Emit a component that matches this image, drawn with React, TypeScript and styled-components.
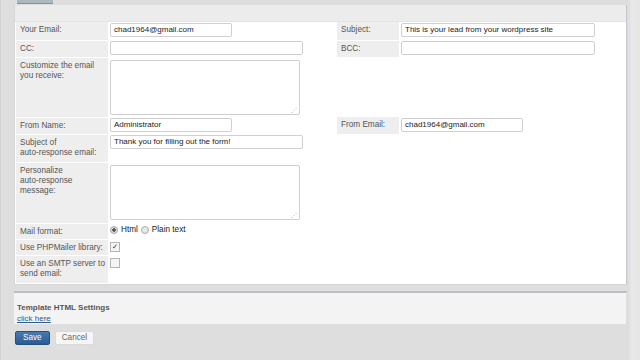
import styled, { createGlobalStyle } from "styled-components";

const GlobalStyle = createGlobalStyle`
  html, body {
    margin: 0;
    padding: 0;
    background: #dedede;
    font-family: "Liberation Sans", Arial, sans-serif;
    font-size: 8px;
    color: #333;
  }
  #root {
    width: 640px;
    height: 360px;
    overflow: hidden;
  }
`;

const Page = styled.div`
  display: flex;
  height: 360px;
`;

const Main = styled.div`
  flex: 1;
  display: flex;
  flex-direction: column;
  padding-left: 13px;
  border-left: 1px solid #d2d2d2;
`;

const Side = styled.div`
  width: 13px;
  background: linear-gradient(to right, #dadada 0, #e9e9e9 5px, #e4e4e4 100%);
`;

const TabStrip = styled.div`
  height: 5px;
  display: flex;
  padding-left: 3px;
`;

const Tab = styled.div`
  width: 36px;
  height: 3px;
  background: #a9b9bd;
  border-bottom: 1px solid #7f979c;
`;

const Panel = styled.div`
  background: #fff;
  border: 1px solid #d6d6d6;
  border-right: 1px solid #c2c8ce;
  border-top: none;
`;

const PanelHead = styled.div`
  height: 16px;
  background: #ececec;
  border-bottom: 1px solid #e4e4e4;
`;

const FormTable = styled.table`
  border-collapse: collapse;
  margin-left: 1px;
  table-layout: fixed;
  width: 610px;
`;

const Label = styled.td<{ $h: number }>`
  background: #eeeeee;
  color: #555;
  height: ${(p) => p.$h}px;
  padding: 3px 3px 0 4px;
  vertical-align: top;
  line-height: 10px;
  font-size: 8.2px;
  border-bottom: 1px solid #fff;
  box-sizing: border-box;
`;

const Field = styled.td`
  vertical-align: top;
  padding: 1px 0 0 2px;
`;

const Blank = styled.td``;

const TextInput = styled.div<{ $w: number }>`
  width: ${(p) => p.$w}px;
  height: 14px;
  box-sizing: border-box;
  border: 1px solid #cfcfcf;
  border-radius: 2px;
  padding: 0 3px;
  line-height: 12px;
  color: #222;
  font-size: 8px;
  white-space: nowrap;
  overflow: hidden;
`;

const TextArea = styled.div`
  width: 190px;
  height: 55px;
  box-sizing: border-box;
  border: 1px solid #cfcfcf;
  border-radius: 2px;
  margin-top: 2px;
  position: relative;
`;

const Grip = styled.span`
  position: absolute;
  right: 2px;
  bottom: 1px;
  font-size: 6px;
  color: #aaa;
  line-height: 6px;
`;

const Choices = styled.div`
  display: flex;
  align-items: center;
  gap: 3px;
  color: #222;
  font-size: 8.2px;
`;

const Radio = styled.span<{ $on?: boolean }>`
  width: 6px;
  height: 6px;
  border-radius: 50%;
  border: 1px solid #a9a9a9;
  background: ${(p) => (p.$on ? "radial-gradient(circle, #555 0 1.5px, #ddd 2px)" : "#e8e8e8")};
  margin-top: 2px;
`;

const Check = styled.span`
  display: inline-flex;
  align-items: center;
  justify-content: center;
  width: 8px;
  height: 8px;
  border: 1px solid #b5b5b5;
  background: #f4f4f4;
  font-size: 7px;
  color: #333;
  margin-top: 2px;
`;

const Gap = styled.div`
  height: 6px;
`;

const Settings = styled.div`
  border-top: 2px solid #b9bec4;
  background: #f3f3f3;
  height: 33px;
  padding: 9px 0 0 3px;
  box-sizing: border-box;
  border-right: 1px solid #e0e0e0;
`;

const SettingsTitle = styled.div`
  font-weight: bold;
  color: #555;
  line-height: 11px;
`;

const Link = styled.a`
  color: #2c5a8c;
  text-decoration: underline;
  line-height: 11px;
`;

const Actions = styled.div`
  display: flex;
  gap: 5px;
  padding: 7px 0 0 1px;
`;

const Button = styled.button<{ $primary?: boolean }>`
  font-family: "Liberation Sans", Arial, sans-serif;
  font-size: 8.2px;
  height: 14px;
  padding: 0 ${(p) => (p.$primary ? 7 : 6)}px;
  border-radius: 2px;
  border: 1px solid ${(p) => (p.$primary ? "#23507f" : "#dadada")};
  background: ${(p) => (p.$primary ? "linear-gradient(#4a7bb0, #2a5b90)" : "#f6f6f6")};
  color: ${(p) => (p.$primary ? "#fff" : "#666")};
  line-height: 12px;
`;

export default function App() {
  return (
    <>
      <GlobalStyle />
      <Page>
        <Main>
          <TabStrip>
            <Tab />
          </TabStrip>
          <Panel>
            <PanelHead />
            <FormTable>
              <colgroup>
                <col style={{ width: 92 }} />
                <col style={{ width: 229 }} />
                <col style={{ width: 62 }} />
                <col />
              </colgroup>
              <tbody>
                <tr>
                  <Label $h={18}>Your Email:</Label>
                  <Field><TextInput $w={122}>chad1964@gmail.com</TextInput></Field>
                  <Label $h={18}>Subject:</Label>
                  <Field><TextInput $w={194}>This is your lead from your wordpress site</TextInput></Field>
                </tr>
                <tr>
                  <Label $h={17}>CC:</Label>
                  <Field><TextInput $w={193} /></Field>
                  <Label $h={17}>BCC:</Label>
                  <Field><TextInput $w={194} /></Field>
                </tr>
                <tr>
                  <Label $h={60}>Customize the email<br />you receive:</Label>
                  <Field><TextArea><Grip>⋰</Grip></TextArea></Field>
                  <Blank />
                  <Blank />
                </tr>
                <tr>
                  <Label $h={17}>From Name:</Label>
                  <Field><TextInput $w={122}>Administrator</TextInput></Field>
                  <Label $h={17}>From Email:</Label>
                  <Field><TextInput $w={122}>chad1964@gmail.com</TextInput></Field>
                </tr>
                <tr>
                  <Label $h={28}>Subject of<br />auto-response email:</Label>
                  <Field><TextInput $w={193}>Thank you for filling out the form!</TextInput></Field>
                  <Blank />
                  <Blank />
                </tr>
                <tr>
                  <Label $h={61}>Personalize<br />auto-response<br />message:</Label>
                  <Field><TextArea><Grip>⋰</Grip></TextArea></Field>
                  <Blank />
                  <Blank />
                </tr>
                <tr>
                  <Label $h={16}>Mail format:</Label>
                  <Field>
                    <Choices>
                      <Radio $on /> Html <Radio /> Plain text
                    </Choices>
                  </Field>
                  <Blank />
                  <Blank />
                </tr>
                <tr>
                  <Label $h={16}>Use PHPMailer library:</Label>
                  <Field><Check>✓</Check></Field>
                  <Blank />
                  <Blank />
                </tr>
                <tr>
                  <Label $h={28}>Use an SMTP server to<br />send email:</Label>
                  <Field><Check /></Field>
                  <Blank />
                  <Blank />
                </tr>
              </tbody>
            </FormTable>
          </Panel>
          <Gap />
          <Settings>
            <SettingsTitle>Template HTML Settings</SettingsTitle>
            <Link>click here</Link>
          </Settings>
          <Actions>
            <Button $primary>Save</Button>
            <Button>Cancel</Button>
          </Actions>
        </Main>
        <Side />
      </Page>
    </>
  );
}
